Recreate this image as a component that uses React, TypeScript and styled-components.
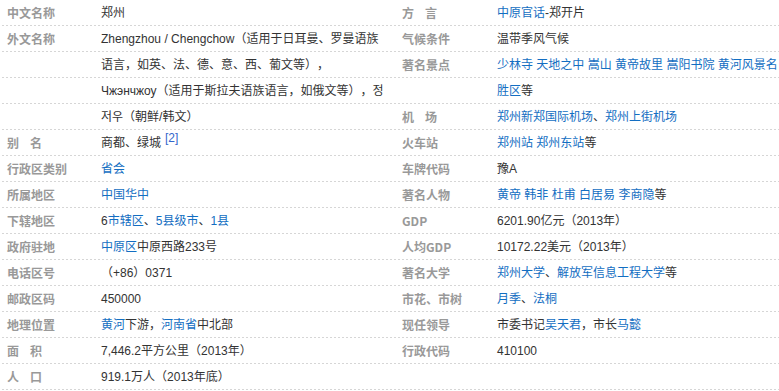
import React from 'react';
import styled, { createGlobalStyle } from 'styled-components';

const GlobalStyle = createGlobalStyle`
  html, body {
    margin: 0;
    padding: 0;
    background: #fff;
  }
  body {
    font-family: "Liberation Sans", Arial, "Noto Sans CJK SC", sans-serif;
    font-size: 12px;
    color: #333;
    text-spacing-trim: space-all;
  }
`;

const InfoBox = styled.div`
  display: grid;
  grid-template-columns: 390px 1fr;
  width: 779px;
  background-color: #fff;
  background-image:
    linear-gradient(90deg, #fff 2px, transparent 2px),
    linear-gradient(180deg, transparent 25px, #d6d6d6 25px, #d6d6d6 26px);
  background-size: 4px 100%, 100% 26px;
`;

const Column = styled.dl<{ $indent: number; $labelWidth: number }>`
  display: grid;
  grid-template-columns: ${p => p.$labelWidth}px 1fr;
  grid-auto-rows: min-content;
  align-content: start;
  margin: 0;
  padding-left: ${p => p.$indent}px;
`;

const Label = styled.dt`
  font-family: "Noto Sans CJK SC", "Liberation Sans", sans-serif;
  font-weight: bold;
  color: #999;
  line-height: 26px;
  padding-left: 7px;
  white-space: nowrap;
  margin: 0;
`;

const Value = styled.dd`
  margin: 0;
  line-height: 26px;
  color: #333;
`;

const Filler = styled.div`
  grid-column: 1 / -1;
  height: 26px;
`;

const Link = styled.a`
  color: #136ec2;
  text-decoration: none;
`;

const Ref = styled.sup`
  color: #3366cc;
  font-size: 12px;
  line-height: 0;
  margin-left: 4px;
  vertical-align: 5px;
`;

const sp = '\u00a0\u00a0\u00a0\u00a0';

export default function App() {
  return (
    <>
      <GlobalStyle />
      <InfoBox>
        <Column $indent={0} $labelWidth={101}>
          <Label>中文名称</Label>
          <Value>郑州</Value>

          <Label>外文名称</Label>
          <Value>
            Zhengzhou / Chengchow（适用于日耳曼、罗曼语族语言，如英、法、德、意、西、葡文等），
            <br />
            Чжэнчжоу（适用于斯拉夫语族语言，如俄文等），정저우（朝鲜/韩文）
          </Value>

          <Label>别{sp}名</Label>
          <Value>
            商都、绿城<Ref>[2]</Ref>
          </Value>

          <Label>行政区类别</Label>
          <Value><Link>省会</Link></Value>

          <Label>所属地区</Label>
          <Value><Link>中国华中</Link></Value>

          <Label>下辖地区</Label>
          <Value>
            6<Link>市辖区</Link>、<Link>5县级市</Link>、<Link>1县</Link>
          </Value>

          <Label>政府驻地</Label>
          <Value>
            <Link>中原区</Link>中原西路233号
          </Value>

          <Label>电话区号</Label>
          <Value>（+86）0371</Value>

          <Label>邮政区码</Label>
          <Value>450000</Value>

          <Label>地理位置</Label>
          <Value>
            <Link>黄河</Link>下游，<Link>河南省</Link>中北部
          </Value>

          <Label>面{sp}积</Label>
          <Value>7,446.2平方公里（2013年）</Value>

          <Label>人{sp}口</Label>
          <Value>919.1万人（2013年底）</Value>
        </Column>

        <Column $indent={5} $labelWidth={102}>
          <Label>方{sp}言</Label>
          <Value>
            <Link>中原官话</Link>-郑开片
          </Value>

          <Label>气候条件</Label>
          <Value>温带季风气候</Value>

          <Label>著名景点</Label>
          <Value>
            <Link>少林寺</Link> <Link>天地之中</Link> <Link>嵩山</Link> <Link>黄帝故里</Link>{' '}
            <Link>嵩阳书院</Link> <Link>黄河风景名胜区</Link>等
          </Value>

          <Label>机{sp}场</Label>
          <Value>
            <Link>郑州新郑国际机场</Link>、<Link>郑州上街机场</Link>
          </Value>

          <Label>火车站</Label>
          <Value>
            <Link>郑州站</Link> <Link>郑州东站</Link>等
          </Value>

          <Label>车牌代码</Label>
          <Value>豫A</Value>

          <Label>著名人物</Label>
          <Value>
            <Link>黄帝</Link> <Link>韩非</Link> <Link>杜甫</Link> <Link>白居易</Link>{' '}
            <Link>李商隐</Link>等
          </Value>

          <Label>GDP</Label>
          <Value>6201.90亿元（2013年）</Value>

          <Label>人均GDP</Label>
          <Value>10172.22美元（2013年）</Value>

          <Label>著名大学</Label>
          <Value>
            <Link>郑州大学</Link>、<Link>解放军信息工程大学</Link>等
          </Value>

          <Label>市花、市树</Label>
          <Value>
            <Link>月季</Link>、<Link>法桐</Link>
          </Value>

          <Label>现任领导</Label>
          <Value>
            市委书记<Link>吴天君</Link>，市长<Link>马懿</Link>
          </Value>

          <Label>行政代码</Label>
          <Value>410100</Value>

          <Filler />
        </Column>
      </InfoBox>
    </>
  );
}
